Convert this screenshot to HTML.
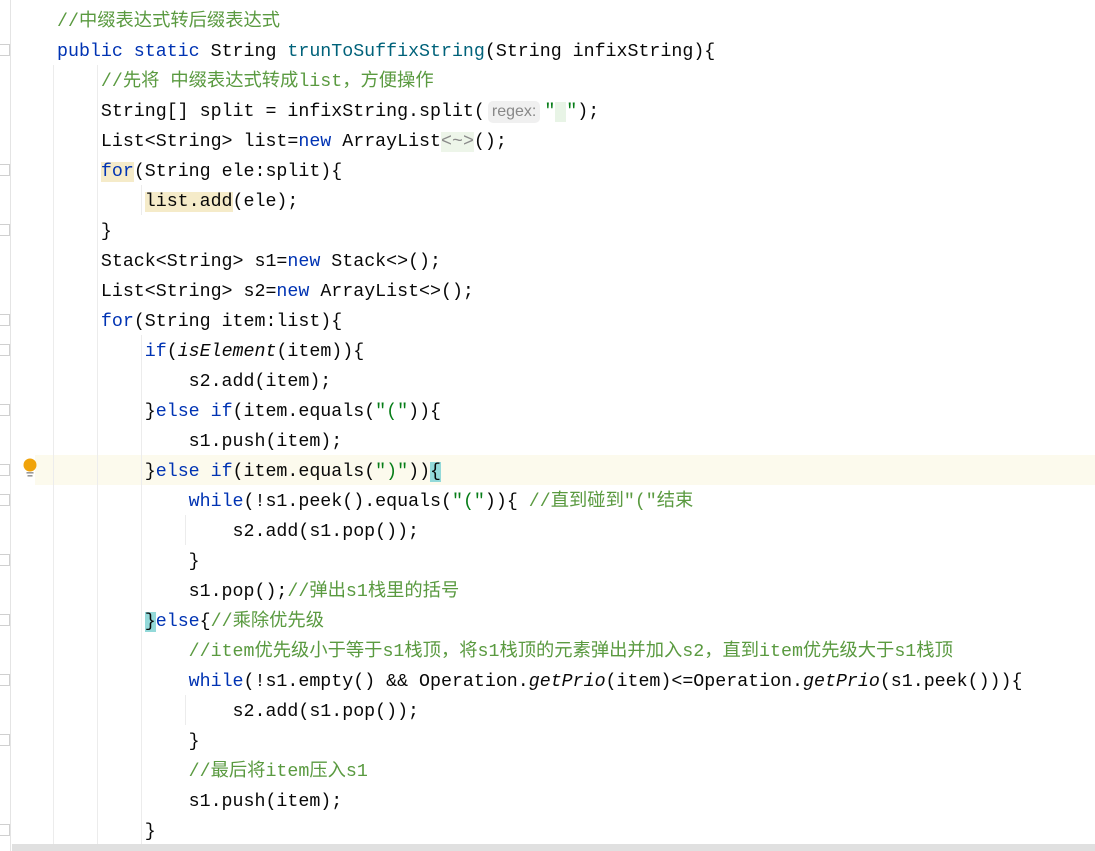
<!DOCTYPE html>
<html><head><meta charset="utf-8"><style>
body{margin:0;width:1095px;height:851px;background:#fff;position:relative;overflow:hidden;font-family:"Liberation Mono","Noto Sans CJK SC",monospace;font-size:18.3px;color:#080808}
.l{position:absolute;left:57px;height:30px;line-height:30px;white-space:pre;margin-top:2px}
.k{color:#0033b3}.c{color:#5a9a40}.s{color:#067d17}.m{color:#00627a}.i{font-style:italic}
.g{position:absolute;width:1px;background:#ececec}
.hl{position:absolute;left:35px;right:0;top:455px;height:30px;background:#fcfaed}
.f{position:absolute;left:0;width:10px;height:12px;border:1px solid #d0d0d0;border-left:none;background:#fff;box-sizing:border-box}
</style></head><body>
<div style="position:absolute;left:10px;top:0;width:1px;height:851px;background:#e4e4e4"></div>
<div class="hl"></div>
<div class="g" style="left:53px;top:65px;height:786px"></div>
<div class="g" style="left:97px;top:65px;height:786px"></div>
<div class="g" style="left:141px;top:185px;height:30px"></div>
<div class="g" style="left:141px;top:335px;height:516px"></div>
<div class="g" style="left:185px;top:515px;height:30px"></div>
<div class="g" style="left:185px;top:695px;height:30px"></div>
<div class="f" style="top:44px"></div><div class="f" style="top:164px"></div><div class="f" style="top:224px"></div>
<div class="f" style="top:314px"></div><div class="f" style="top:344px"></div><div class="f" style="top:404px"></div>
<div class="f" style="top:464px"></div><div class="f" style="top:494px"></div><div class="f" style="top:554px"></div>
<div class="f" style="top:614px"></div><div class="f" style="top:674px"></div><div class="f" style="top:734px"></div><div class="f" style="top:824px"></div>
<svg style="position:absolute;left:22px;top:458px" width="16" height="20"><circle cx="8" cy="7" r="6.5" fill="#f0a30a"/><rect x="4.5" y="14" width="7" height="1.6" fill="#999"/><rect x="5.5" y="17" width="5" height="1.6" fill="#999"/></svg>
<div class="l" style="top:5px"><span class="c">//中缀表达式转后缀表达式</span></div>
<div class="l" style="top:35px"><span class="k">public static </span>String <span class="m">trunToSuffixString</span>(String infixString){</div>
<div class="l" style="top:65px">    <span class="c">//先将 中缀表达式转成list，方便操作</span></div>
<div class="l" style="top:95px">    String[] split = infixString.split(<span style="display:inline-block;font-family:'Liberation Sans',sans-serif;font-size:16px;color:#888;background:#f0f0f0;border-radius:5px;padding:0 4px;line-height:22px;margin:0 4px 0 3px">regex:</span><span class="s">"<span style="background:#e8f4e6"> </span>"</span>);</div>
<div class="l" style="top:125px">    List&lt;String&gt; list=<span class="k">new</span> ArrayList<span style="color:#8a8a8a;background:#edf5e9">&lt;~&gt;</span>();</div>
<div class="l" style="top:155px">    <span class="k" style="background:#f5ebc9">for</span>(String ele:split){</div>
<div class="l" style="top:185px">        <span style="background:#f5ebc9">list.add</span>(ele);</div>
<div class="l" style="top:215px">    }</div>
<div class="l" style="top:245px">    Stack&lt;String&gt; s1=<span class="k">new</span> Stack&lt;&gt;();</div>
<div class="l" style="top:275px">    List&lt;String&gt; s2=<span class="k">new</span> ArrayList&lt;&gt;();</div>
<div class="l" style="top:305px">    <span class="k">for</span>(String item:list){</div>
<div class="l" style="top:335px">        <span class="k">if</span>(<span class="i">isElement</span>(item)){</div>
<div class="l" style="top:365px">            s2.add(item);</div>
<div class="l" style="top:395px">        }<span class="k">else if</span>(item.equals(<span class="s">"("</span>)){</div>
<div class="l" style="top:425px">            s1.push(item);</div>
<div class="l" style="top:455px">        }<span class="k">else if</span>(item.equals(<span class="s">")"</span>))<span style="background:#93d9d9">{</span></div>
<div class="l" style="top:485px">            <span class="k">while</span>(!s1.peek().equals(<span class="s">"("</span>)){ <span class="c">//直到碰到"("结束</span></div>
<div class="l" style="top:515px">                s2.add(s1.pop());</div>
<div class="l" style="top:545px">            }</div>
<div class="l" style="top:575px">            s1.pop();<span class="c">//弹出s1栈里的括号</span></div>
<div class="l" style="top:605px">        <span style="background:#93d9d9">}</span><span class="k">else</span>{<span class="c">//乘除优先级</span></div>
<div class="l" style="top:635px">            <span class="c">//item优先级小于等于s1栈顶，将s1栈顶的元素弹出并加入s2，直到item优先级大于s1栈顶</span></div>
<div class="l" style="top:665px">            <span class="k">while</span>(!s1.empty() &amp;&amp; Operation.<span class="i">getPrio</span>(item)&lt;=Operation.<span class="i">getPrio</span>(s1.peek())){</div>
<div class="l" style="top:695px">                s2.add(s1.pop());</div>
<div class="l" style="top:725px">            }</div>
<div class="l" style="top:755px">            <span class="c">//最后将item压入s1</span></div>
<div class="l" style="top:785px">            s1.push(item);</div>
<div class="l" style="top:815px">        }</div>
<div style="position:absolute;left:12px;right:0;top:844px;height:7px;background:#e0e0e0"></div>
</body></html>
